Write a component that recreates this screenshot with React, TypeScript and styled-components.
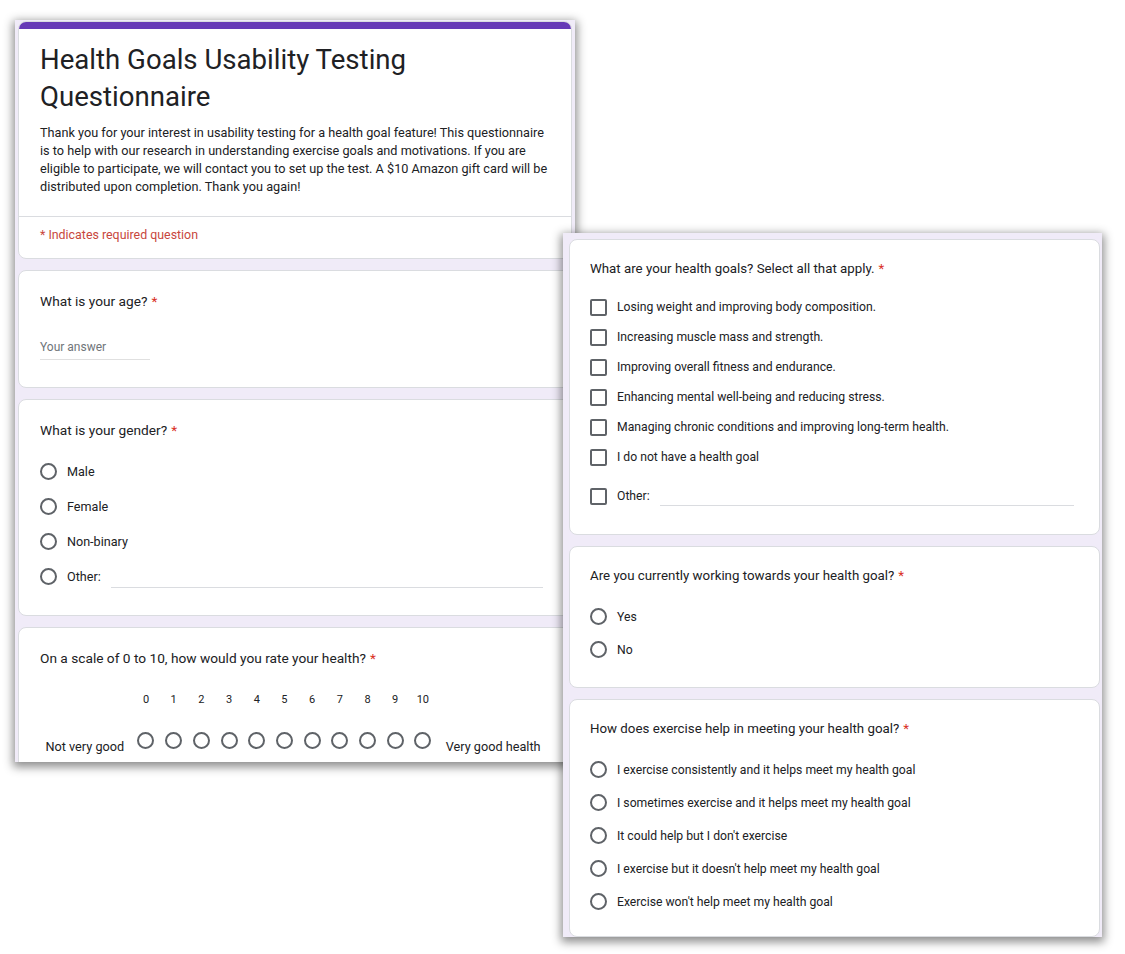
import React from 'react';
import styled, { createGlobalStyle } from 'styled-components';

const GlobalStyle = createGlobalStyle`
  html, body {
    margin: 0;
    padding: 0;
    background: #ffffff;
  }
  body {
    font-family: Roboto, "Noto Sans", "Liberation Sans", sans-serif;
    color: #202124;
  }
`;

const Desk = styled.div`
  position: relative;
  width: 1125px;
  height: 954px;
  overflow: hidden;
  background: #ffffff;
`;

// each screenshot lies on the desk like a window, so it is placed by coordinates
const Shot = styled.div<{ $left: number; $top: number; $width: number; $height: number; $pad: string }>`
  position: absolute;
  left: ${p => p.$left}px;
  top: ${p => p.$top}px;
  width: ${p => p.$width}px;
  height: ${p => p.$height}px;
  box-sizing: border-box;
  padding: ${p => p.$pad};
  background: #f0ebf8;
  box-shadow: 0 3px 9px 2px rgba(0, 0, 0, 0.45);
  overflow: hidden;
  display: flex;
  flex-direction: column;
  gap: 11px;
`;

const Card = styled.div<{ $pad?: string }>`
  flex-shrink: 0;
  background: #ffffff;
  border: 1px solid #dadce0;
  border-radius: 8px;
  padding: ${p => p.$pad || '0'};
  overflow: hidden;
`;

const Stripe = styled.div`
  height: 8px;
  margin: -1px -1px 0;
  background: #673ab7;
`;

const HeaderBody = styled.div`
  padding: 12px 21px 20px;
  border-bottom: 1px solid #dadce0;
`;

const Title = styled.h1`
  margin: 0;
  font-size: 27.6px;
  line-height: 37px;
  font-weight: 400;
  color: #202124;
`;

const Description = styled.p`
  margin: 9px 0 0;
  font-size: 12.7px;
  line-height: 18px;
  color: #202124;
`;

const RequiredNote = styled.div`
  padding: 10px 21px 15px;
  font-size: 12.4px;
  line-height: 16px;
  color: #c8473d;
`;

const Question = styled.div<{ $size: number; $after: number }>`
  font-size: ${p => p.$size}px;
  line-height: 20px;
  color: #202124;
  margin-bottom: ${p => p.$after}px;
`;

const Star = styled.span`
  color: #d93025;
  margin-left: 4px;
`;

const ShortAnswer = styled.div`
  width: 110px;
  margin-top: 28px;
  padding-bottom: 4px;
  border-bottom: 1px solid #e0e0e0;
  font-size: 12px;
  line-height: 16px;
  color: #70757a;
`;

const Option = styled.div<{ $h: number; $size: number; $before?: number }>`
  display: flex;
  align-items: center;
  gap: 10px;
  height: ${p => p.$h}px;
  margin-top: ${p => p.$before || 0}px;
  font-size: ${p => p.$size}px;
  color: #202124;
`;

const Radio = styled.span<{ $d: number }>`
  flex-shrink: 0;
  box-sizing: border-box;
  width: ${p => p.$d}px;
  height: ${p => p.$d}px;
  border: 2px solid #5f6368;
  border-radius: 50%;
`;

const Checkbox = styled.span`
  flex-shrink: 0;
  box-sizing: border-box;
  width: 17px;
  height: 17px;
  border: 2px solid #5f6368;
  border-radius: 2px;
`;

const OtherLine = styled.span<{ $drop: number; $end: number }>`
  flex: 1;
  align-self: center;
  height: 1px;
  margin: ${p => p.$drop * 2}px ${p => p.$end}px 0 0;
  background: #dadce0;
`;

const ScaleGrid = styled.div`
  display: grid;
  grid-template-columns: auto repeat(11, 27.7px) auto;
  justify-content: center;
  align-items: center;
  margin-left: -4px;
`;

const ScaleNumber = styled.div`
  text-align: center;
  font-size: 11px;
  line-height: 16px;
  color: #202124;
`;

const ScaleCell = styled.div`
  display: flex;
  justify-content: center;
  align-items: center;
  height: 24px;
`;

const ScaleLabel = styled.div<{ $right?: boolean }>`
  font-size: 12.7px;
  line-height: 16px;
  align-self: end;
  margin-bottom: -3px;
  color: #202124;
  text-align: ${p => (p.$right ? 'left' : 'right')};
  padding: ${p => (p.$right ? '0 0 0 9px' : '0 8px 0 0')};
`;

const Spacer = styled.div<{ $h: number }>`
  grid-column: 1 / -1;
  height: ${p => p.$h}px;
`;

const genders = ['Male', 'Female', 'Non-binary'];
const goals = [
  'Losing weight and improving body composition.',
  'Increasing muscle mass and strength.',
  'Improving overall fitness and endurance.',
  'Enhancing mental well-being and reducing stress.',
  'Managing chronic conditions and improving long-term health.',
  'I do not have a health goal',
];
const exercise = [
  'I exercise consistently and it helps meet my health goal',
  'I sometimes exercise and it helps meet my health goal',
  "It could help but I don't exercise",
  "I exercise but it doesn't help meet my health goal",
  "Exercise won't help meet my health goal",
];
const scale = Array.from({ length: 11 }, (_, i) => i);

export default function App() {
  return (
    <Desk>
      <GlobalStyle />

      <Shot $left={15} $top={20} $width={560} $height={742} $pad="1px 3px 0 3px">
        <Card>
          <Stripe />
          <HeaderBody>
            <Title>Health Goals Usability Testing Questionnaire</Title>
            <Description>
              Thank you for your interest in usability testing for a health goal feature! This questionnaire
              is to help with our research in understanding exercise goals and motivations. If you are
              eligible to participate, we will contact you to set up the test. A $10 Amazon gift card will be
              distributed upon completion. Thank you again!
            </Description>
          </HeaderBody>
          <RequiredNote>* Indicates required question</RequiredNote>
        </Card>

        <Card $pad="20px 21px 27px">
          <Question $size={13.7} $after={0}>
            What is your age?<Star>*</Star>
          </Question>
          <ShortAnswer>Your answer</ShortAnswer>
        </Card>

        <Card $pad="20px 21px 21px">
          <Question $size={13.7} $after={14}>
            What is your gender?<Star>*</Star>
          </Question>
          {genders.map(g => (
            <Option key={g} $h={35} $size={12.6}>
              <Radio $d={17} />
              {g}
            </Option>
          ))}
          <Option $h={35} $size={12.6}>
            <Radio $d={17} />
            Other:
            <OtherLine $drop={11} $end={7} />
          </Option>
        </Card>

        <Card $pad="20px 21px 24px">
          <Question $size={13.7} $after={24}>
            On a scale of 0 to 10, how would you rate your health?<Star>*</Star>
          </Question>
          <ScaleGrid>
            <div />
            {scale.map(n => (
              <ScaleNumber key={n}>{n}</ScaleNumber>
            ))}
            <div />
            <Spacer $h={20} />
            <ScaleLabel>Not very good</ScaleLabel>
            {scale.map(n => (
              <ScaleCell key={n}>
                <Radio $d={17} />
              </ScaleCell>
            ))}
            <ScaleLabel $right>Very good health</ScaleLabel>
          </ScaleGrid>
        </Card>
      </Shot>

      <Shot $left={563} $top={233} $width={539} $height={704} $pad="6px 2px 0 6px">
        <Card $pad="19px 20px 23px">
          <Question $size={13.3} $after={13}>
            What are your health goals? Select all that apply.<Star>*</Star>
          </Question>
          {goals.map(g => (
            <Option key={g} $h={30} $size={12.2}>
              <Checkbox />
              {g}
            </Option>
          ))}
          <Option $h={30} $size={12.2} $before={9}>
            <Checkbox />
            Other:
            <OtherLine $drop={9} $end={5} />
          </Option>
        </Card>

        <Card $pad="19px 20px 21px">
          <Question $size={13.3} $after={14}>
            Are you currently working towards your health goal?<Star>*</Star>
          </Question>
          {['Yes', 'No'].map(a => (
            <Option key={a} $h={33} $size={12.2}>
              <Radio $d={17} />
              {a}
            </Option>
          ))}
        </Card>

        <Card $pad="19px 20px 18px">
          <Question $size={13.3} $after={14}>
            How does exercise help in meeting your health goal?<Star>*</Star>
          </Question>
          {exercise.map(a => (
            <Option key={a} $h={33} $size={12.2}>
              <Radio $d={17} />
              {a}
            </Option>
          ))}
        </Card>
      </Shot>
    </Desk>
  );
}
